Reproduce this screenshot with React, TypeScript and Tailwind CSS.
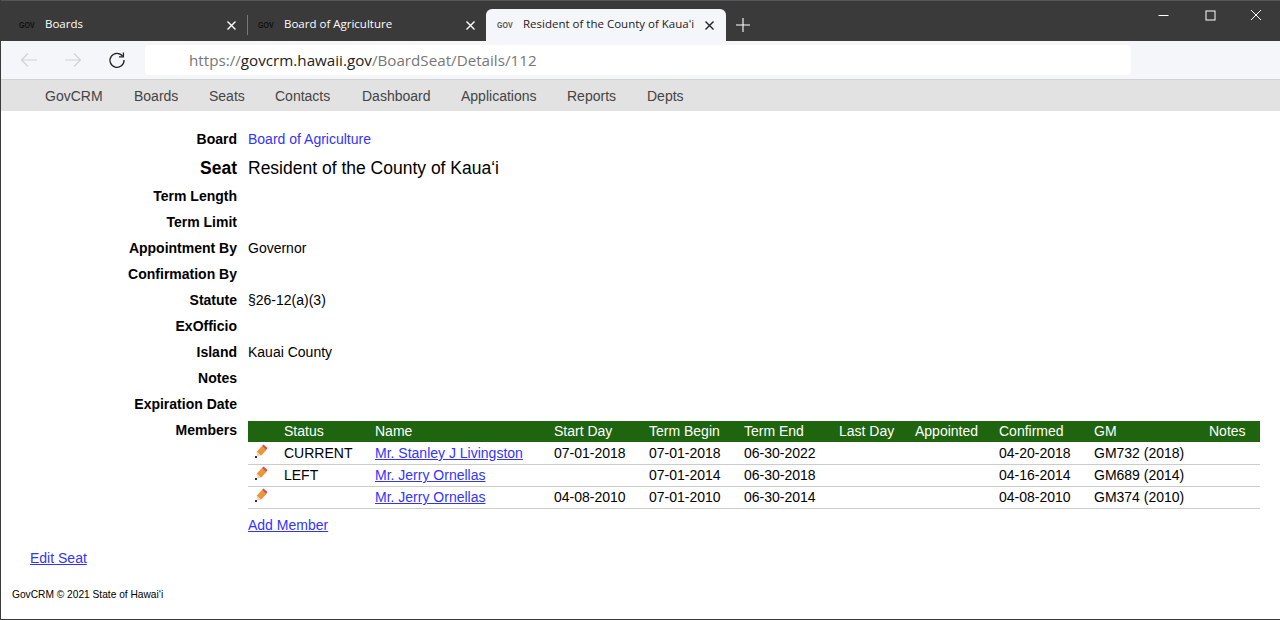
const sans = "font-['Liberation_Sans',Arial,sans-serif]";

function Gov({ dark }: { dark?: boolean }) {
  return (
    <span className={`inline-block w-[16px] shrink-0 origin-left scale-x-[0.74] text-[9.5px] leading-none font-bold font-['Liberation_Sans',sans-serif] whitespace-nowrap ${dark ? "text-[#555]" : "text-[#111]"}`}>
      GOV
    </span>
  );
}

function X({ color, size = 11 }: { color: string; size?: number }) {
  return (
    <svg width={size} height={size} viewBox="0 0 11 11" className="shrink-0">
      <path d="M1.5 1.5l8 8M9.5 1.5l-8 8" stroke={color} strokeWidth="1.4" fill="none" />
    </svg>
  );
}

function Pencil() {
  return (
    <svg width="14" height="14" viewBox="0 0 14 14" className="block">
      <path d="M8 2 12.5 6 7 11.8 2.6 7.8z" fill="#e8983a" />
      <path d="M8 2l1.5-1.6 4 3.6-1.5 2z" fill="#de4a4a" />
      <path d="M2.6 7.8 7 11.8l-3.8.6z" fill="#edd7b0" />
      <rect x="1" y="12" width="2" height="2" fill="#333" />
    </svg>
  );
}

const fields: [string, string][] = [
  ["Term Length", ""],
  ["Term Limit", ""],
  ["Appointment By", "Governor"],
  ["Confirmation By", ""],
  ["Statute", "§26-12(a)(3)"],
  ["ExOfficio", ""],
  ["Island", "Kauai County"],
  ["Notes", ""],
  ["Expiration Date", ""],
];

const nav: [string, string][] = [
  ["GovCRM", "w-[89px]"],
  ["Boards", "w-[75px]"],
  ["Seats", "w-[66px]"],
  ["Contacts", "w-[87px]"],
  ["Dashboard", "w-[99px]"],
  ["Applications", "w-[106px]"],
  ["Reports", "w-[80px]"],
  ["Depts", "w-[60px]"],
];

const cols = "grid grid-cols-[36px_91px_179px_95px_95px_95px_76px_84px_95px_115px_51px]";
const headers = ["", "Status", "Name", "Start Day", "Term Begin", "Term End", "Last Day", "Appointed", "Confirmed", "GM", "Notes"];
const rows = [
  ["CURRENT", "Mr. Stanley J Livingston", "07-01-2018", "07-01-2018", "06-30-2022", "", "", "04-20-2018", "GM732 (2018)", ""],
  ["LEFT", "Mr. Jerry Ornellas", "", "07-01-2014", "06-30-2018", "", "", "04-16-2014", "GM689 (2014)", ""],
  ["", "Mr. Jerry Ornellas", "04-08-2010", "07-01-2010", "06-30-2014", "", "", "04-08-2010", "GM374 (2010)", ""],
];

function Label({ children, className = "" }: { children: React.ReactNode; className?: string }) {
  return <div className={`w-[236px] shrink-0 text-right font-bold ${className}`}>{children}</div>;
}

export default function App() {
  return (
    <div className={`${sans} h-[620px] w-[1280px] overflow-hidden bg-white border-l border-b border-[#3a3a3a] text-[14px] text-black flex flex-col`}>
      {/* tab strip */}
      <div className="h-[41px] shrink-0 bg-[#3a3a3a] border-t border-[#555] -ml-px flex items-end relative font-['Open_Sans',sans-serif] text-[11.5px]">
        <div className="w-[247px] h-[32px] flex items-center pl-[19px] pr-[10px] text-white">
          <Gov />
          <span className="ml-[10px] flex-1 pb-[2px]">Boards</span>
          <X color="#fff" />
        </div>
        <div className="w-px h-[20px] bg-[#777] mb-[6px]" />
        <div className="w-[238px] h-[32px] flex items-center pl-[10px] pr-[10px] text-white">
          <Gov />
          <span className="ml-[10px] flex-1 pb-[2px]">Board of Agriculture</span>
          <X color="#fff" />
        </div>
        <div className="w-[240px] h-[32px] rounded-t-[6px] bg-[#f5f6fa] flex items-center pl-[11px] pr-[11px] text-[#222]">
          <Gov dark />
          <span className="ml-[10px] flex-1 pb-[2px] whitespace-nowrap">Resident of the County of Kauaʻi</span>
          <X color="#222" />
        </div>
        <svg width="16" height="16" viewBox="0 0 16 16" className="ml-[9px] mb-[8px]">
          <path d="M8 1v14M1 8h14" stroke="#fff" strokeWidth="1.1" />
        </svg>
        <div className="ml-auto self-start flex items-center h-[28px] pr-[18px]">
          <svg width="11" height="11" viewBox="0 0 11 11"><path d="M0.5 5.5h10" stroke="#fff" /></svg>
          <svg width="11" height="11" viewBox="0 0 11 11" className="ml-[36px]"><rect x="1" y="1" width="9" height="9" stroke="#fff" fill="none" /></svg>
          <svg width="12" height="12" viewBox="0 0 12 12" className="ml-[34px]"><path d="M1 1l10 10M11 1L1 11" stroke="#fff" /></svg>
        </div>
      </div>
      {/* toolbar */}
      <div className="h-[39px] shrink-0 bg-[#f5f6fa] border-b border-[#d2d2d2] flex items-center pl-[19px]">
        <svg width="18" height="16" viewBox="0 0 18 16">
          <path d="M17 8H1.5M8 1.5 1.5 8 8 14.5" stroke="#cfd1d6" strokeWidth="1.2" fill="none" />
        </svg>
        <svg width="18" height="16" viewBox="0 0 18 16" className="ml-[26px]">
          <path d="M1 8h15.5M10 1.5 16.5 8 10 14.5" stroke="#cfd1d6" strokeWidth="1.2" fill="none" />
        </svg>
        <svg width="18" height="18" viewBox="0 0 18 18" className="ml-[26px]">
          <path d="M14.6 5.2A7 7 0 1 0 16 9" stroke="#222" strokeWidth="1.3" fill="none" />
          <path d="M15.4 1.4v4.4H11" stroke="#222" strokeWidth="1.3" fill="none" />
        </svg>
        <div className="ml-[19px] w-[986px] h-[30px] rounded-[4px] bg-white flex items-center pl-[44px] pt-[1px] font-['Open_Sans',sans-serif] text-[15.2px] text-[#777] whitespace-nowrap">
          https://<span className="text-[#222]">govcrm.hawaii.gov</span>/BoardSeat/Details/112
        </div>
      </div>
      {/* nav */}
      <div className="h-[31px] shrink-0 bg-[#e2e2e2] flex items-center pl-[44px] pt-[1px] text-[#444] whitespace-nowrap">
        {nav.map(([n, w]) => (
          <div key={n} className={w}>{n}</div>
        ))}
      </div>
      {/* body */}
      <div className="pt-[15px] flex-1 flex flex-col">
        <div className="flex items-center h-[26px] gap-[11px]">
          <Label>Board</Label>
          <span className="text-[#3333ff]">Board of Agriculture</span>
        </div>
        <div className="flex items-center h-[31px] pt-[2px] gap-[11px] text-[17.5px]">
          <Label>Seat</Label>
          <span>Resident of the County of Kauaʻi</span>
        </div>
        {fields.map(([k, v]) => (
          <div key={k} className="flex items-center h-[26px] gap-[11px]">
            <Label>{k}</Label>
            <span>{v}</span>
          </div>
        ))}
        <div className="flex gap-[11px]">
          <Label className="pt-[3px]">Members</Label>
          <div className="w-[1012px] pt-[4px]">
            <div className={`${cols} h-[21px] items-center bg-[#1f640e] text-white`}>
              {headers.map((h, i) => (
                <div key={i}>{h}</div>
              ))}
            </div>
            <div className="pt-[1px]">
              {rows.map((r, i) => (
                <div key={i} className={`${cols} h-[22px] items-center border-b border-[#ccc]`}>
                  <div className="pl-[6px] -mt-[6px]"><Pencil /></div>
                  {r.map((c, j) => (
                    <div key={j} className="whitespace-nowrap">
                      {j === 1 ? <a className="text-[#3333ff] underline">{c}</a> : c}
                    </div>
                  ))}
                </div>
              ))}
            </div>
            <a className="block mt-[6px] text-[#3333ff] underline">Add Member</a>
          </div>
        </div>
        <a className="block ml-[29px] mt-[12px] text-[#3333ff] underline">Edit Seat</a>
        <div className="ml-[11px] mt-[20px] text-[10.2px] leading-[12px]">GovCRM © 2021 State of Hawaiʻi</div>
      </div>
    </div>
  );
}
